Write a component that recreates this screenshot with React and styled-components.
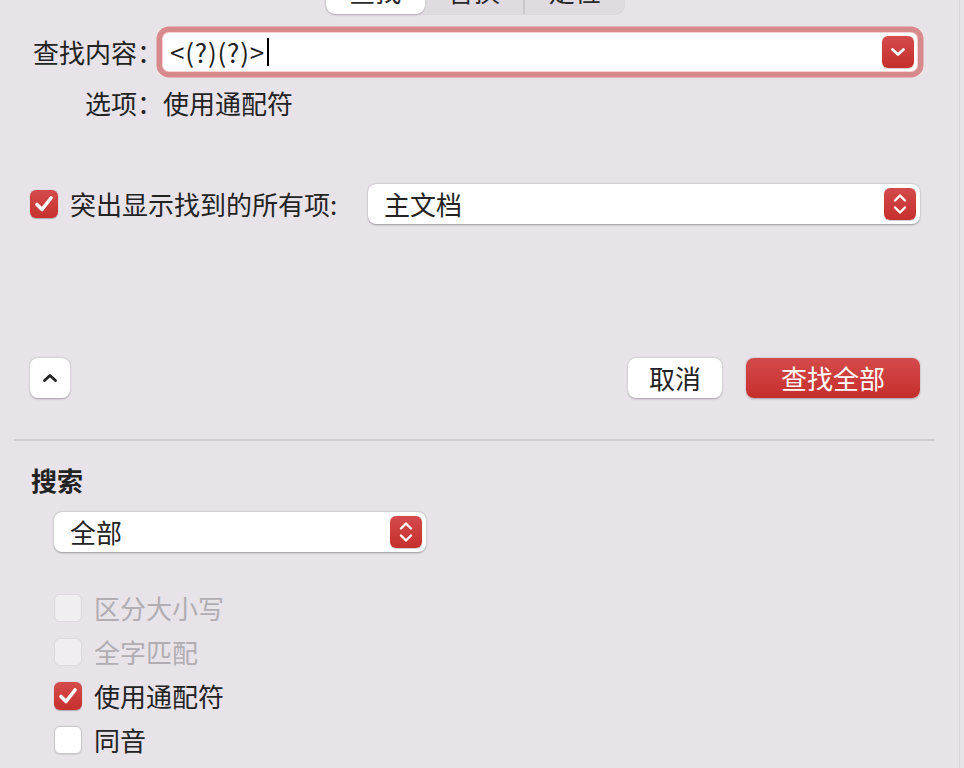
import React from "react";
import styled, { createGlobalStyle } from "styled-components";

const Global = createGlobalStyle`
  html, body { margin: 0; padding: 0; background: #e8e3e9; }
  body { font-family: "Noto Sans CJK SC", "Noto Sans", sans-serif; color: #232323; }
  #root { width: 964px; height: 768px; overflow: hidden; }
`;

const Window = styled.div`
  width: 920px;
  height: 768px;
  padding: 0 39px 0 0;
  border-right: 1px solid #d9d5da;
  overflow: hidden;
  font-size: 26px;
  line-height: 30px;
`;

const Content = styled.div`
  padding-left: 30px;
  width: 890px;
`;

const TopBar = styled.div`
  display: flex;
  align-items: center;
  margin-top: -29px;
  margin-left: 325px;
  width: 300px;
  height: 44px;
  padding: 1px;
  box-sizing: border-box;
  border-radius: 10px;
  background: #e0dbe1;
  box-shadow: inset 0 0 0 1px #dcd7dd;
`;

const Segment = styled.div`
  flex: 1;
  align-self: stretch;
  display: flex;
  align-items: center;
  justify-content: center;
  padding-bottom: 5px;
  border-radius: 9px;
  font-size: 26px;
  color: #2a2a2a;
  background: ${(p) => (p.$active ? "#fff" : "transparent")};
  box-shadow: ${(p) => (p.$active ? "0 1px 2px rgba(0,0,0,0.22)" : "none")};
`;

const SegDivider = styled.div`
  width: 2px;
  height: 22px;
  margin-top: 20px;
  background: #cdc8ce;
  flex-shrink: 0;
`;

const SearchRow = styled.div`
  display: flex;
  align-items: center;
  margin-top: 18px;
`;

const RowLabel = styled.div`
  width: 133px;
  text-align: right;
  white-space: nowrap;
  flex-shrink: 0;
`;

const Field = styled.div`
  width: 754px;
  height: 38px;
  box-sizing: border-box;
  background: #fff;
  border-radius: 6px;
  box-shadow: 0 0 0 1px #f3d3d4, 0 0 0 6.5px #d8898b;
  display: flex;
  align-items: center;
  padding: 0 3px 0 7px;
`;

const FieldText = styled.span`
  font-size: 26px;
  letter-spacing: 0.8px;
  color: #1e1e1e;
`;

const Caret = styled.span`
  display: inline-block;
  width: 2px;
  height: 28px;
  background: #000;
  margin-left: 2px;
`;

const RedSquare = styled.div`
  width: 32px;
  height: 32px;
  border-radius: 6px;
  background: linear-gradient(#d54b4c, #c52f2c);
  display: flex;
  align-items: center;
  justify-content: center;
  flex-shrink: 0;
  margin-left: auto;
  box-shadow: 0 0.5px 1px rgba(0,0,0,0.2);
`;

const OptionRow = styled.div`
  display: flex;
  margin-top: 17px;
`;

const HighlightRow = styled.div`
  display: flex;
  align-items: center;
  margin-top: 66px;
`;

const CheckLabel = styled.span`
  margin-left: 12px;
  white-space: nowrap;
  color: ${(p) => (p.$disabled ? "#b1adb2" : "#232323")};
`;

const Box = styled.div`
  width: 28px;
  height: 28px;
  box-sizing: border-box;
  border-radius: 6px;
  flex-shrink: 0;
  display: flex;
  align-items: center;
  justify-content: center;
  ${(p) =>
    p.$checked
      ? "background: linear-gradient(#d54b4c, #c6302d); box-shadow: 0 0.5px 1px rgba(0,0,0,0.25);"
      : p.$disabled
      ? "background: #f1eef2; border: 1px solid #dcd8dd;"
      : "background: #fff; border: 1px solid #c9c5ca; box-shadow: 0 0.5px 1px rgba(0,0,0,0.1);"}
`;

const Popup = styled.div`
  width: ${(p) => p.$w}px;
  height: 40px;
  box-sizing: border-box;
  border-radius: 8px;
  background: #fff;
  box-shadow: 0 0.5px 2px rgba(0,0,0,0.35);
  display: flex;
  align-items: center;
  padding: 0 4px 0 16px;
  margin-left: ${(p) => (p.$auto ? "auto" : "0")};
`;

const ButtonRow = styled.div`
  display: flex;
  align-items: center;
  margin-top: 134px;
`;

const IconButton = styled.div`
  width: 40px;
  height: 40px;
  border-radius: 8px;
  background: #fff;
  box-shadow: 0 0.5px 2px rgba(0,0,0,0.3);
  display: flex;
  align-items: center;
  justify-content: center;
`;

const PushButton = styled.div`
  width: ${(p) => p.$w}px;
  height: 40px;
  border-radius: 8px;
  display: flex;
  align-items: center;
  justify-content: center;
  margin-left: ${(p) => p.$ml};
  background: ${(p) => (p.$primary ? "linear-gradient(#d44a4b, #c52f2c)" : "#fff")};
  color: ${(p) => (p.$primary ? "#fff" : "#232323")};
  box-shadow: 0 0.5px 2px rgba(0,0,0,0.3);
`;

const Separator = styled.div`
  height: 2px;
  background: #d2cdd3;
  margin: 41px -15px 0 14px;
`;

const Heading = styled.div`
  font-weight: 700;
  margin-top: 24px;
  padding-left: 1px;
`;

const Indented = styled.div`
  padding-left: 24px;
`;

const ScopeWrap = styled.div`
  margin-top: 17px;
`;

const CheckList = styled.div`
  margin-top: 34px;
  display: flex;
  flex-direction: column;
`;

const CheckRow = styled.div`
  display: flex;
  align-items: center;
  height: 44px;
`;

const Check = () => (
  <svg width="22" height="22" viewBox="0 0 22 22">
    <path d="M4 11.5 L9 16.5 L18 5" fill="none" stroke="#fff" strokeWidth="3.6" strokeLinecap="round" strokeLinejoin="round" />
  </svg>
);

const ChevronDown = () => (
  <svg width="16" height="10" viewBox="0 0 16 10">
    <path d="M2.5 2.5 L8 7.5 L13.5 2.5" fill="none" stroke="#fff" strokeWidth="2.8" strokeLinecap="round" strokeLinejoin="round" />
  </svg>
);

const Stepper = () => (
  <svg width="16" height="24" viewBox="0 0 16 24">
    <path d="M3 8.5 L8 3.5 L13 8.5" fill="none" stroke="#fff" strokeWidth="2.4" strokeLinecap="round" strokeLinejoin="round" />
    <path d="M3 15.5 L8 20.5 L13 15.5" fill="none" stroke="#fff" strokeWidth="2.4" strokeLinecap="round" strokeLinejoin="round" />
  </svg>
);

const ChevronUp = () => (
  <svg width="16" height="10" viewBox="0 0 16 10">
    <path d="M2.5 7.5 L8 2.5 L13.5 7.5" fill="none" stroke="#222" strokeWidth="2.8" strokeLinecap="round" strokeLinejoin="round" />
  </svg>
);

const CheckItem = ({ checked, disabled, children }) => (
  <CheckRow>
    <Box $checked={checked} $disabled={disabled}>{checked && <Check />}</Box>
    <CheckLabel $disabled={disabled}>{children}</CheckLabel>
  </CheckRow>
);

export default function App() {
  return (
    <>
      <Global />
      <Window>
        <TopBar>
          <Segment $active>查找</Segment>
          <Segment>替换</Segment>
          <SegDivider />
          <Segment>定位</Segment>
        </TopBar>
        <Content>
          <SearchRow>
            <RowLabel>查找内容：</RowLabel>
            <Field>
              <FieldText>&lt;(?)(?)&gt;</FieldText>
              <Caret />
              <RedSquare><ChevronDown /></RedSquare>
            </Field>
          </SearchRow>
          <OptionRow>
            <RowLabel>选项：</RowLabel>
            <span>使用通配符</span>
          </OptionRow>
          <HighlightRow>
            <Box $checked><Check /></Box>
            <CheckLabel>突出显示找到的所有项:</CheckLabel>
            <Popup $w={552} $auto>
              主文档
              <RedSquare><Stepper /></RedSquare>
            </Popup>
          </HighlightRow>
          <ButtonRow>
            <IconButton><ChevronUp /></IconButton>
            <PushButton $w={94} $ml="auto">取消</PushButton>
            <PushButton $w={174} $ml="24px" $primary>查找全部</PushButton>
          </ButtonRow>
        </Content>
        <Separator />
        <Content>
          <Heading>搜索</Heading>
          <Indented>
            <ScopeWrap>
              <Popup $w={372}>
                全部
                <RedSquare><Stepper /></RedSquare>
              </Popup>
            </ScopeWrap>
            <CheckList>
              <CheckItem disabled>区分大小写</CheckItem>
              <CheckItem disabled>全字匹配</CheckItem>
              <CheckItem checked>使用通配符</CheckItem>
              <CheckItem>同音</CheckItem>
            </CheckList>
          </Indented>
        </Content>
      </Window>
    </>
  );
}
